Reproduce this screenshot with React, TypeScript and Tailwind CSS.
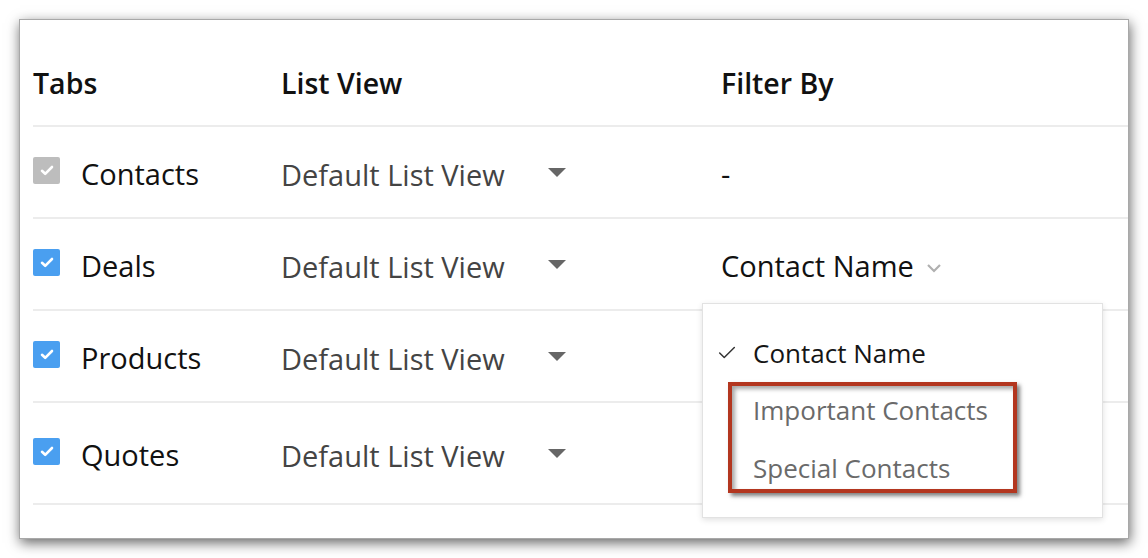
import { Check } from 'lucide-react';

type Row = {
  name: string;
  locked?: boolean;
  filter: string;
  hasMenu?: boolean;
};

const rows: Row[] = [
  { name: 'Contacts', locked: true, filter: '-' },
  { name: 'Deals', filter: 'Contact Name', hasMenu: true },
  { name: 'Products', filter: '' },
  { name: 'Quotes', filter: '' }
];

function Checkbox({ locked }: { locked?: boolean }) {
  return (
    <div
      className={`flex size-[27px] shrink-0 items-center justify-center rounded-[2px] ${
        locked ? 'bg-[#bdbdbd]' : 'bg-[#4a9ff0]'
      }`}
    >
      <svg width="14" height="11" viewBox="0 0 14 11" fill="none">
        <path d="M2 5.8l3.2 3L12 2" stroke="white" strokeWidth="2.6" strokeLinecap="round" strokeLinejoin="round" />
      </svg>
    </div>
  );
}

function FilterMenu() {
  return (
    <div className="absolute left-[669px] top-[84px] z-10 h-[215px] w-[401px] border border-[#e2e2e2] bg-white shadow-[0_2px_6px_rgba(0,0,0,0.12)]">
      <div className="flex h-[98px] items-center pl-[13px] text-[26px] text-[#151515]">
        <Check className="mr-[15px] size-[22px] text-[#333]" strokeWidth={1.6} />
        Contact Name
      </div>
      <div className="-mt-[7px] pl-[50px] text-[26px] text-[#6a6a6a]">
        <div className="flex h-[30px] items-center">Important Contacts</div>
        <div className="mt-[28px] flex h-[30px] items-center">Special Contacts</div>
      </div>
      <div className="absolute left-[25px] top-[78px] h-[111px] w-[289px] border-[4px] border-[#b3361f] shadow-[3px_3px_4px_rgba(0,0,0,0.5),inset_3px_3px_4px_rgba(0,0,0,0.35)]" />
    </div>
  );
}

export default function App() {
  return (
    <div className="h-[558px] w-[1148px] bg-white p-[19px] font-['Open_Sans',sans-serif]">
      <div className="h-[520px] w-[1110px] border border-[#a8a8a8] bg-white pl-[13px] shadow-[1px_4px_12px_rgba(0,0,0,0.6)]">
        <div className="flex h-[107px] items-center border-b-2 border-[#ececec] pt-[22px] text-[28.5px] font-semibold text-[#111]">
          <div className="w-[248px]">Tabs</div>
          <div className="w-[440px]">List View</div>
          <div>Filter By</div>
        </div>
        {rows.map((row, i) => (
          <div
            key={row.name}
            className={`relative flex items-center border-b-2 border-[#ececec] ${i === 3 ? 'h-[102px]' : 'h-[92px]'}`}
          >
            <div className="flex w-[248px] items-center">
              <div className="mb-[4px]">
                <Checkbox locked={row.locked} />
              </div>
              <span className="ml-[21px] pt-[4px] text-[29px] text-[#111]">{row.name}</span>
            </div>
            <div className="flex w-[440px] items-center pt-[6px]">
              <span className="w-[267px] text-[29px] text-[#444]">Default List View</span>
              <svg width="18" height="9" viewBox="0 0 18 9" className="mt-[-6px]">
                <path d="M0 0h18L9 9z" fill="#666" />
              </svg>
            </div>
            <div className="flex items-center pt-[4px]">
              {row.filter && (
                <span className="text-[29px] text-[#111]">{row.filter}</span>
              )}
              {row.hasMenu && (
                <svg width="16" height="10" viewBox="0 0 16 10" className="ml-[12px] mt-[4px]">
                  <path d="M2 2l6 6 6-6" stroke="#b0b0b0" strokeWidth="2.2" fill="none" />
                </svg>
              )}
            </div>
            {row.hasMenu && <FilterMenu />}
          </div>
        ))}
      </div>
    </div>
  );
}
